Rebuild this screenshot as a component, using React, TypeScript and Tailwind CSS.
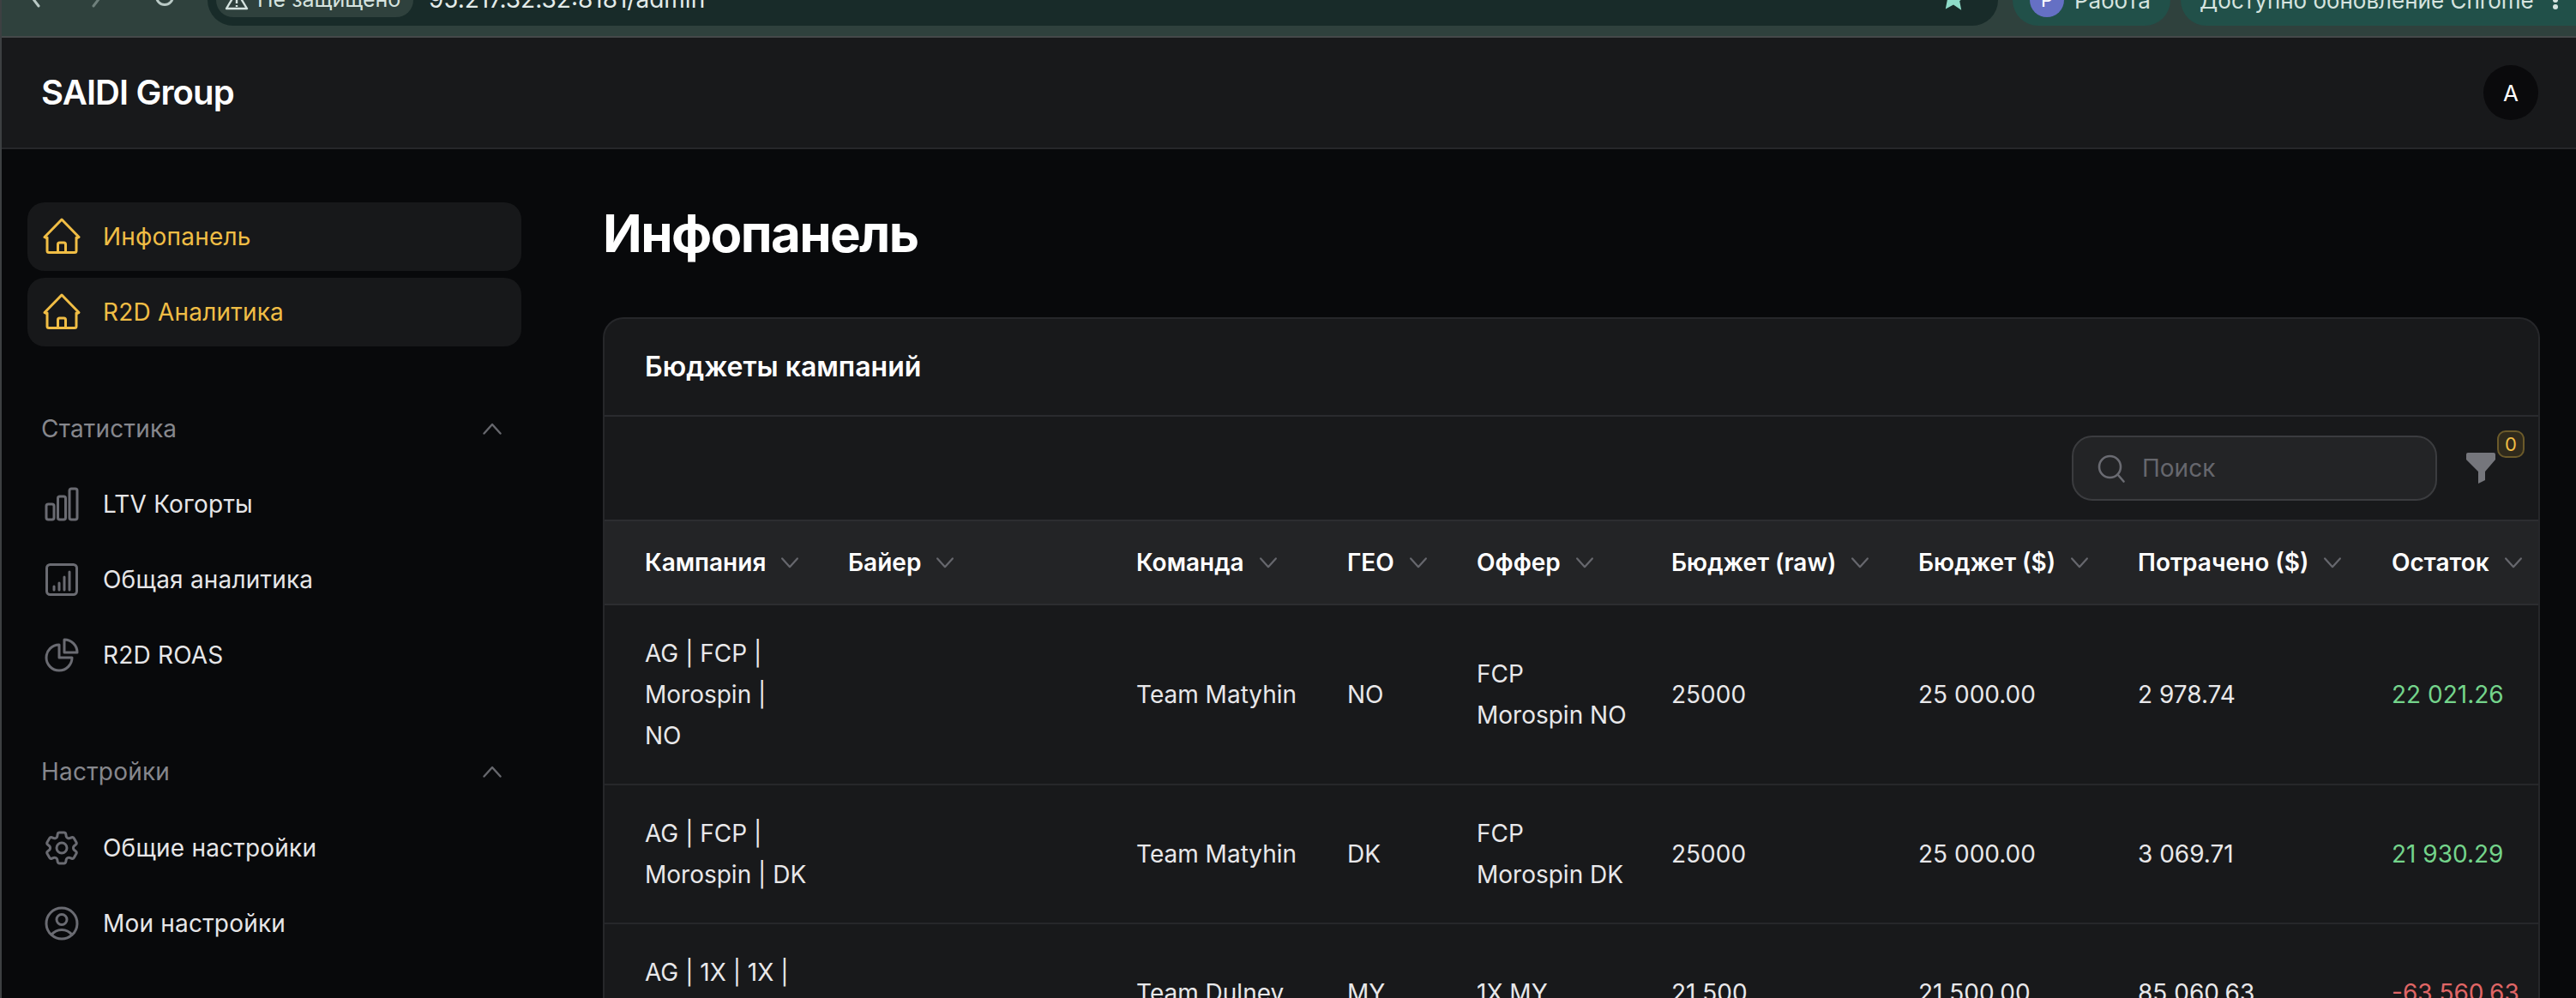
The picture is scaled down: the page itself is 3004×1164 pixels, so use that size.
import { HiOutlineChartBar, HiOutlineChartPie, HiOutlineCog6Tooth, HiOutlineUserCircle } from "react-icons/hi2";

const Home = () => (
  <svg viewBox="0 0 48 48" className="size-12 shrink-0 text-[#f0bd45]" fill="none" stroke="currentColor" strokeWidth="3" strokeLinejoin="round" strokeLinecap="round">
    <path d="M4 24.5 24 4l20 20.5-2.5 1M4 24.5l2.5 1" />
    <path d="M7 25v15.5a2 2 0 0 0 2 2h30a2 2 0 0 0 2-2V25" />
    <path d="M19.5 42.5V33a2 2 0 0 1 2-2h5a2 2 0 0 1 2 2v9.5" />
  </svg>
);

const Analytics = () => (
  <svg viewBox="0 0 48 48" className="size-12 shrink-0 text-[#6a6b72]" fill="none" stroke="currentColor" strokeWidth="3" strokeLinecap="round">
    <rect x="6.5" y="6.5" width="35" height="35" rx="4" />
    <path d="M15 36v-4M21 36v-8M27 36V21M33 36V15" />
  </svg>
);

const Chev = ({ up }: { up?: boolean }) => (
  <svg viewBox="0 0 22 14" className={up ? "w-[22px] h-[14px] text-[#66676d]" : "w-[22px] h-[13px] shrink-0 text-[#66676d]"} fill="none" stroke="currentColor" strokeWidth="2.4" strokeLinecap="round" strokeLinejoin="round">
    <path d={up ? "M1.5 12.5 11 2l9.5 10.5" : "M1.5 1.5 11 12l9.5-10.5"} />
  </svg>
);

const NavLink = ({ icon, label }: { icon: React.ReactNode; label: string }) => (
  <div className="h-[80px] pl-4 flex items-center gap-6 text-[28px] tracking-[0.2px] text-[#e6e6e8]">
    {icon}
    <span>{label}</span>
  </div>
);

const Active = ({ label }: { label: string }) => (
  <div className="h-[80px] pl-4 flex items-center gap-6 rounded-[20px] bg-[#17181a] text-[28px] tracking-[0.2px] text-[#f0bd45]">
    <Home />
    <span>{label}</span>
  </div>
);

const SectionTitle = ({ label }: { label: string }) => (
  <div className="h-[56px] pl-[16px] pr-[23px] flex items-center justify-between text-[28px] tracking-[0.2px] text-[#86878d]">
    <span>{label}</span>
    <Chev up />
  </div>
);

const heads = ["Кампания", "Байер", "Команда", "ГЕО", "Оффер", "Бюджет (raw)", "Бюджет ($)", "Потрачено ($)", "Остаток"];

const rows = [
  { name: ["AG | FCP |", "Morospin |", "NO"], team: "Team Matyhin", geo: "NO", offer: ["FCP", "Morospin NO"], raw: "25000", budget: "25 000.00", spent: "2 978.74", rest: "22 021.26", pos: true },
  { name: ["AG | FCP |", "Morospin | DK"], team: "Team Matyhin", geo: "DK", offer: ["FCP", "Morospin DK"], raw: "25000", budget: "25 000.00", spent: "3 069.71", rest: "21 930.29", pos: true },
  { name: ["AG | 1X | 1X |", "MY"], team: "Team Dulney", geo: "MY", offer: ["1X MY"], raw: "21 500", budget: "21 500.00", spent: "85 060.63", rest: "-63 560.63", pos: false },
];

const Lines = ({ lines }: { lines: string[] }) => (
  <>
    {lines.map((l) => (
      <div key={l}>{l}</div>
    ))}
  </>
);

export default function App() {
  return (
    <div className="h-[1164px] w-[3004px] overflow-hidden flex flex-col border-l-2 border-[#3d4042] bg-[#08090b] font-['Inter',sans-serif] text-white">
      {/* browser chrome */}
      <div className="h-[44px] shrink-0 overflow-hidden border-b-2 border-[#45494a] bg-[#2f413d]">
        <div className="-mt-[30px] h-[60px] flex items-stretch text-[28px] text-[#d5e3df]">
          <div className="w-[240px] shrink-0 flex items-center pl-[30px] gap-[58px] text-[#b9c9c5]">
            <svg viewBox="0 0 16 32" className="w-[16px] h-[32px]" fill="none" stroke="currentColor" strokeWidth="3" strokeLinecap="round"><path d="M13 3 3 16l10 13" transform="translate(0 -6)" /></svg>
            <svg viewBox="0 0 16 32" className="w-[16px] h-[32px] text-[#6f807c]" fill="none" stroke="currentColor" strokeWidth="3" strokeLinecap="round"><path d="M3 3l10 13L3 29" transform="translate(0 -6)" /></svg>
            <svg viewBox="0 0 24 24" className="w-[24px] h-[24px] -mt-[8px]" fill="none" stroke="currentColor" strokeWidth="3"><circle cx="12" cy="12" r="9.5" /></svg>
          </div>
          <div className="w-[2088px] shrink-0 rounded-[30px] bg-[#182b29] flex items-center pl-[10px] pr-[36px]">
            <div className="h-[40px] w-[230px] rounded-[20px] bg-[#2f413d] flex items-center pl-[10px] gap-[10px] text-[25px] whitespace-nowrap">
              <svg viewBox="0 0 28 24" className="w-[28px] h-[24px] shrink-0" fill="none" stroke="currentColor" strokeWidth="2.4" strokeLinejoin="round"><path d="M14 2 26 22H2ZM14 9v7M14 18v2" /></svg>
              <span>Не защищено</span>
            </div>
            <span className="ml-[18px] -mt-[2px] text-[#e3ecea]">95.217.32.32:8181/admin</span>
            <svg viewBox="0 0 24 24" className="ml-auto w-[32px] h-[32px] -mt-[4px] text-[#8fdcc9]" fill="currentColor"><path d="M12 1l3.4 7.2 7.6 1-5.6 5.3 1.5 7.8L12 17.6l-6.9 3.7 1.5-7.8L1 8.2l7.6-1z" /></svg>
          </div>
          <div className="ml-[17px] w-[184px] shrink-0 rounded-[30px] bg-[#215049] flex items-center pl-[20px] gap-[12px] text-[26px]">
            <div className="size-[40px] rounded-full bg-[#6570c4] flex items-center justify-center text-[22px] text-white shrink-0">Р</div>
            <span>Работа</span>
          </div>
          <div className="ml-[12px] flex-1 rounded-l-[30px] bg-[#215049] flex items-center pl-[22px] text-[26px] whitespace-nowrap">
            <span>Доступно обновление Chrome</span>
            <span className="ml-[22px] flex flex-col gap-[2px]">
              <span className="size-[6px] rounded-full bg-[#d5e3df]" />
              <span className="size-[6px] rounded-full bg-[#d5e3df]" />
              <span className="size-[6px] rounded-full bg-[#d5e3df]" />
            </span>
          </div>
        </div>
      </div>

      {/* app header */}
      <header className="h-[130px] shrink-0 border-b-2 border-[#26272a] bg-[#18191b] flex items-center justify-between pl-[46px] pr-[44px]">
        <div className="text-[40px] font-semibold tracking-[-0.9px]">SAIDI Group</div>
        <div className="size-[64px] rounded-full bg-[#0a0a0c] flex items-center justify-center text-[26px]">A</div>
      </header>

      <div className="flex flex-1 min-h-0">
        {/* sidebar */}
        <aside className="w-[701px] shrink-0 pl-[30px] pr-[95px] pt-[62px]">
          <div className="flex flex-col gap-2">
            <Active label="Инфопанель" />
            <Active label="R2D Аналитика" />
          </div>
          <div className="mt-[68px]">
            <SectionTitle label="Статистика" />
            <div className="mt-[20px] flex flex-col gap-2">
              <NavLink label="LTV Когорты" icon={<HiOutlineChartBar className="size-12 shrink-0 text-[#6a6b72]" />} />
              <NavLink label="Общая аналитика" icon={<Analytics />} />
              <NavLink label="R2D ROAS" icon={<HiOutlineChartPie className="size-12 shrink-0 text-[#6a6b72]" />} />
            </div>
          </div>
          <div className="mt-[68px]">
            <SectionTitle label="Настройки" />
            <div className="mt-[21px] flex flex-col gap-2">
              <NavLink label="Общие настройки" icon={<HiOutlineCog6Tooth className="size-12 shrink-0 text-[#6a6b72]" />} />
              <NavLink label="Мои настройки" icon={<HiOutlineUserCircle className="size-12 shrink-0 text-[#6a6b72]" />} />
            </div>
          </div>
        </aside>

        {/* main */}
        <main className="flex-1 min-w-0 pr-[42px] pt-[62px]">
          <h1 className="h-[72px] flex items-center text-[60px] font-bold leading-none tracking-[-1.6px]">Инфопанель</h1>
          <section className="mt-[62px] rounded-t-[24px] border-2 border-b-0 border-[#26272a] bg-[#18191b] overflow-hidden">
            <div className="h-[114px] flex items-center pl-[47px] border-b-2 border-[#2a2b2e] text-[32px] font-semibold">Бюджеты кампаний</div>
            <div className="h-[120px] flex items-center justify-end pr-[50px] gap-[34px]">
              <div className="w-[426px] h-[76px] rounded-[24px] border-2 border-[#3b3c3f] bg-[#232426] flex items-center pl-[28px] gap-[20px]">
                <svg viewBox="0 0 32 33" className="w-[32px] h-[33px] text-[#6a6b72]" fill="none" stroke="currentColor" strokeWidth="2.6" strokeLinecap="round"><circle cx="14.5" cy="14.5" r="12.5" /><path d="m24 24 6.5 7.5" /></svg>
                <span className="text-[28px] text-[#66676d]">Поиск</span>
              </div>
              <div className="relative">
                <svg viewBox="0 0 34 36" className="w-[34px] h-[36px] text-[#75767c]" fill="currentColor"><path d="M2 0h30a2 2 0 0 1 2 2v6L22 22v10l-8 4V22L0 8V2a2 2 0 0 1 2-2Z" /></svg>
                <div className="absolute -top-[26px] -right-[34px] w-[32px] h-[32px] rounded-[10px] border-2 border-[#6b5a2a] bg-[#2f2a1c] flex items-center justify-center text-[22px] text-[#f0bd45]">0</div>
              </div>
            </div>
            <table className="w-[2255px] table-fixed border-collapse text-[28px] leading-[48px] text-[#e8e8ea]">
              <colgroup>
                <col className="w-[284px]" />
                <col className="w-[336px]" />
                <col className="w-[246px]" />
                <col className="w-[151px]" />
                <col className="w-[227px]" />
                <col className="w-[288px]" />
                <col className="w-[256px]" />
                <col className="w-[296px]" />
                <col className="w-[171px]" />
              </colgroup>
              <thead>
                <tr className="h-[98px] bg-[#232426] border-y-2 border-[#2c2d30]">
                  {heads.map((h, i) => (
                    <th key={h} className={i === 0 ? "pl-[47px] text-left font-semibold text-white" : "text-left font-semibold text-white"}>
                      <div className="flex items-center gap-[17px] whitespace-nowrap">
                        <span>{h}</span>
                        <Chev />
                      </div>
                    </th>
                  ))}
                </tr>
              </thead>
              <tbody>
                {rows.map((r) => (
                  <tr key={r.geo} className="border-b-2 border-[#26272a]">
                    <td className="pl-[47px] py-[32px]"><Lines lines={r.name} /></td>
                    <td />
                    <td>{r.team}</td>
                    <td>{r.geo}</td>
                    <td><Lines lines={r.offer} /></td>
                    <td>{r.raw}</td>
                    <td>{r.budget}</td>
                    <td>{r.spent}</td>
                    <td className={r.pos ? "text-[#74d48b] whitespace-nowrap" : "text-[#e06666] whitespace-nowrap"}>{r.rest}</td>
                  </tr>
                ))}
              </tbody>
            </table>
          </section>
        </main>
      </div>
    </div>
  );
}
